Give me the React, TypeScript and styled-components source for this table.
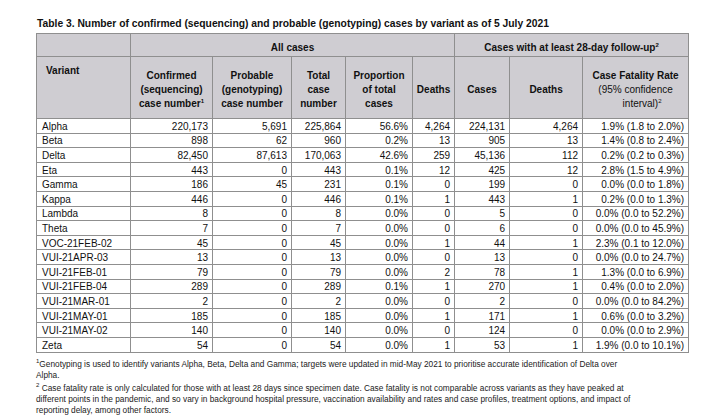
import React from "react";
import styled, { createGlobalStyle } from "styled-components";

const Global = createGlobalStyle`
  html, body { margin: 0; padding: 0; background: #ffffff; }
  body { font-family: "Liberation Sans", Arial, sans-serif; color: #111; }
`;

const Page = styled.div`
  width: 719px;
  height: 416px;
  box-sizing: border-box;
  padding: 18px 0 0 36px;
  overflow: hidden;
`;

const Title = styled.h1`
  margin: 0 0 3px 1px;
  font-size: 10.3px;
  line-height: 12px;
  font-weight: 700;
  white-space: nowrap;
`;

const Table = styled.table`
  border-collapse: collapse;
  table-layout: fixed;
  width: 652px;
  font-size: 10px;
`;

const HeadCell = styled.th<{ $align?: string; $valign?: string; $pl?: number }>`
  background: #cfcdd2;
  border: 1px solid #8f8f8f;
  font-weight: 700;
  text-align: ${(p) => p.$align || "center"};
  vertical-align: ${(p) => p.$valign || "middle"};
  padding: ${(p) => (p.$valign === "top" ? "7px" : "5px")} 3px 0 ${(p) => p.$pl ?? 3}px;
  line-height: 14px;
`;

const TopRow = styled.tr`
  height: 23px;
`;

const SubRow = styled.tr`
  height: 62px;
`;

const DataRow = styled.tr`
  height: 14.6px;
`;

const Cell = styled.td<{ $left?: boolean }>`
  border: 1px solid #8f8f8f;
  padding: 1px ${(p) => (p.$left ? "3px" : "4px")} 0 ${(p) => (p.$left ? "5px" : "3px")};
  text-align: ${(p) => (p.$left ? "left" : "right")};
  line-height: 11px;
  white-space: nowrap;
  vertical-align: middle;
`;

const Regular = styled.span<{ $shift?: number }>`
  display: block;
  font-weight: 400;
  padding-left: ${(p) => p.$shift ?? 0}px;
`;

const Sup = styled.sup`
  font-size: 6px;
  line-height: 0;
  vertical-align: 4px;
`;

const Notes = styled.div`
  margin-top: 6px;
  font-size: 8.3px;
  line-height: 11px;
  color: #222;
`;

const Note = styled.p`
  margin: 0 0 2px 0;
`;

const cols = [94, 82, 79, 54, 67, 42, 55, 73, 106];

const rows: string[][] = [
  ["Alpha", "220,173", "5,691", "225,864", "56.6%", "4,264", "224,131", "4,264", "1.9% (1.8 to 2.0%)"],
  ["Beta", "898", "62", "960", "0.2%", "13", "905", "13", "1.4% (0.8 to 2.4%)"],
  ["Delta", "82,450", "87,613", "170,063", "42.6%", "259", "45,136", "112", "0.2% (0.2 to 0.3%)"],
  ["Eta", "443", "0", "443", "0.1%", "12", "425", "12", "2.8% (1.5 to 4.9%)"],
  ["Gamma", "186", "45", "231", "0.1%", "0", "199", "0", "0.0% (0.0 to 1.8%)"],
  ["Kappa", "446", "0", "446", "0.1%", "1", "443", "1", "0.2% (0.0 to 1.3%)"],
  ["Lambda", "8", "0", "8", "0.0%", "0", "5", "0", "0.0% (0.0 to 52.2%)"],
  ["Theta", "7", "0", "7", "0.0%", "0", "6", "0", "0.0% (0.0 to 45.9%)"],
  ["VOC-21FEB-02", "45", "0", "45", "0.0%", "1", "44", "1", "2.3% (0.1 to 12.0%)"],
  ["VUI-21APR-03", "13", "0", "13", "0.0%", "0", "13", "0", "0.0% (0.0 to 24.7%)"],
  ["VUI-21FEB-01", "79", "0", "79", "0.0%", "2", "78", "1", "1.3% (0.0 to 6.9%)"],
  ["VUI-21FEB-04", "289", "0", "289", "0.1%", "1", "270", "1", "0.4% (0.0 to 2.0%)"],
  ["VUI-21MAR-01", "2", "0", "2", "0.0%", "0", "2", "0", "0.0% (0.0 to 84.2%)"],
  ["VUI-21MAY-01", "185", "0", "185", "0.0%", "1", "171", "1", "0.6% (0.0 to 3.2%)"],
  ["VUI-21MAY-02", "140", "0", "140", "0.0%", "0", "124", "0", "0.0% (0.0 to 2.9%)"],
  ["Zeta", "54", "0", "54", "0.0%", "1", "53", "1", "1.9% (0.0 to 10.1%)"],
];

export default function App() {
  return (
    <Page>
      <Global />
      <Title>
        Table 3. Number of confirmed (sequencing) and probable (genotyping) cases by variant as of 5 July 2021
      </Title>
      <Table>
        <colgroup>
          {cols.map((w, i) => (
            <col key={i} style={{ width: w }} />
          ))}
        </colgroup>
        <thead>
          <TopRow>
            <HeadCell />
            <HeadCell colSpan={5}>All cases</HeadCell>
            <HeadCell colSpan={3}>
              Cases with at least 28-day follow-up<Sup>2</Sup>
            </HeadCell>
          </TopRow>
          <SubRow>
            <HeadCell $align="left" $valign="top" $pl={9}>
              Variant
            </HeadCell>
            <HeadCell>
              Confirmed
              <br />
              (sequencing)
              <br />
              case number<Sup>1</Sup>
            </HeadCell>
            <HeadCell>
              Probable
              <br />
              (genotyping)
              <br />
              case number
            </HeadCell>
            <HeadCell>
              Total
              <br />
              case
              <br />
              number
            </HeadCell>
            <HeadCell>
              Proportion
              <br />
              of total
              <br />
              cases
            </HeadCell>
            <HeadCell>Deaths</HeadCell>
            <HeadCell>Cases</HeadCell>
            <HeadCell>Deaths</HeadCell>
            <HeadCell>
              Case Fatality Rate
              <Regular>(95% confidence</Regular>
              <Regular $shift={13}>
                interval)<Sup>2</Sup>
              </Regular>
            </HeadCell>
          </SubRow>
        </thead>
        <tbody>
          {rows.map((r) => (
            <DataRow key={r[0]}>
              {r.map((v, i) => (
                <Cell key={i} $left={i === 0}>
                  {v}
                </Cell>
              ))}
            </DataRow>
          ))}
        </tbody>
      </Table>
      <Notes>
        <Note>
          <Sup>1</Sup>Genotyping is used to identify variants Alpha, Beta, Delta and Gamma; targets were updated in mid-May 2021 to prioritise accurate identification of Delta over
          <br />
          Alpha.
        </Note>
        <Note>
          <Sup>2</Sup> Case fatality rate is only calculated for those with at least 28 days since specimen date. Case fatality is not comparable across variants as they have peaked at
          <br />
          different points in the pandemic, and so vary in background hospital pressure, vaccination availability and rates and case profiles, treatment options, and impact of
          <br />
          reporting delay, among other factors.
        </Note>
      </Notes>
    </Page>
  );
}
